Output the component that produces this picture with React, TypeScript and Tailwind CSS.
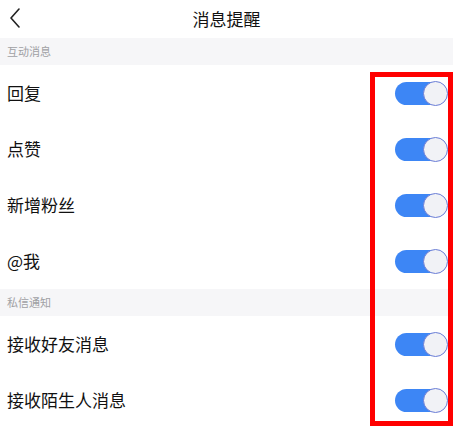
import { useState } from 'react';

type Item = { key: string; label: string };

const sections: { title: string; items: Item[] }[] = [
  {
    title: '互动消息',
    items: [
      { key: 'reply', label: '回复' },
      { key: 'like', label: '点赞' },
      { key: 'fans', label: '新增粉丝' },
      { key: 'at', label: '@我' },
    ],
  },
  {
    title: '私信通知',
    items: [
      { key: 'friend', label: '接收好友消息' },
      { key: 'stranger', label: '接收陌生人消息' },
    ],
  },
];

function Toggle({ on, onChange }: { on: boolean; onChange: () => void }) {
  return (
    <button
      onClick={onChange}
      className={`relative h-[23px] w-[52px] rounded-full ${on ? 'bg-[#3d86f5]' : 'bg-[#e5e5ea]'}`}
    >
      <span
        className={`absolute top-[-1px] h-[25px] w-[25px] rounded-full border border-[#6b7ed6] bg-[#f1f2f6] ${on ? 'right-[-1px]' : 'left-[-1px]'}`}
      />
    </button>
  );
}

export default function App() {
  const [state, setState] = useState<Record<string, boolean>>({
    reply: true,
    like: true,
    fans: true,
    at: true,
    friend: true,
    stranger: true,
  });

  return (
    <div
      className="relative h-[426px] w-[453px] overflow-hidden bg-white text-[#111]"
      style={{ fontFamily: '"Noto Sans CJK SC", "Noto Sans", sans-serif' }}
    >
      <div className="relative flex h-[38px] items-center justify-center">
        <svg className="absolute left-[9px] top-[8px]" width="12" height="20" viewBox="0 0 12 20" fill="none">
          <path d="M10 1 L2 10 L10 19" stroke="#222" strokeWidth="1.6" strokeLinecap="round" strokeLinejoin="round" />
        </svg>
        <span className="text-[17px]">消息提醒</span>
      </div>

      {sections.map((sec) => (
        <div key={sec.title}>
          <div className="flex h-[27px] items-center bg-[#f6f6f8] pl-[7px] text-[11px] text-[#a0a0a4]">
            {sec.title}
          </div>
          {sec.items.map((it) => (
            <div key={it.key} className="flex h-[56px] items-center justify-between pl-[7px] pr-[6px]">
              <span className="text-[17px]">{it.label}</span>
              <Toggle
                on={state[it.key]}
                onChange={() => setState({ ...state, [it.key]: !state[it.key] })}
              />
            </div>
          ))}
        </div>
      ))}

      <div className="pointer-events-none absolute left-[370px] top-[72px] h-[354px] w-[83px] border-[5px] border-[#ff0000]" />
    </div>
  );
}
